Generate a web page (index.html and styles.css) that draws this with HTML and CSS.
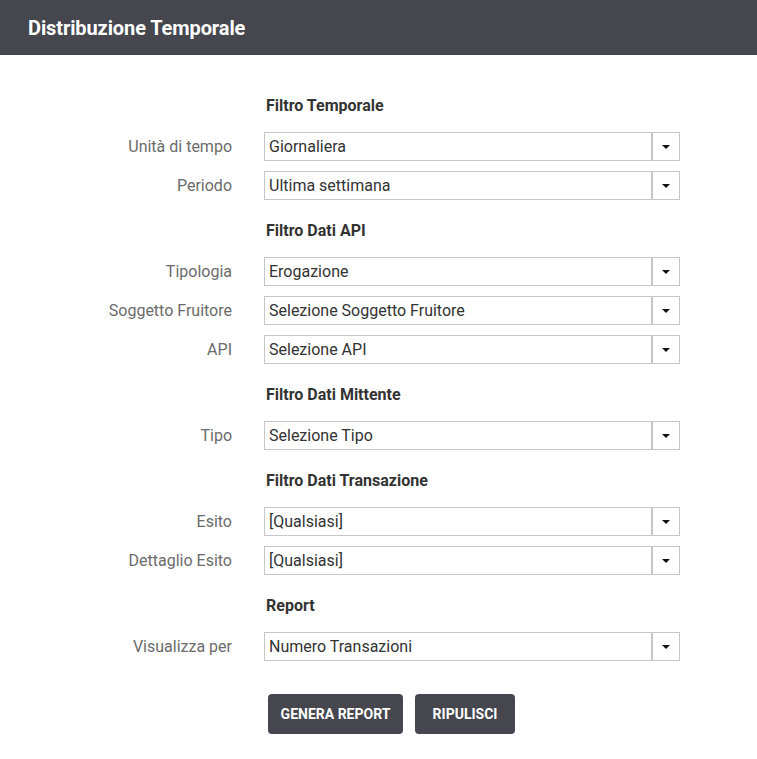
FILE: index.html
```html
<!DOCTYPE html>
<html lang="it">
<head>
<meta charset="utf-8">
<title>Distribuzione Temporale</title>
<link rel="stylesheet" href="styles.css">
</head>
<body>
<header class="topbar"><h1 class="title">Distribuzione Temporale</h1></header>
<main class="form">
  <div class="section">Filtro Temporale</div>
  <label class="label">Unità di tempo</label><div class="select"><span class="value">Giornaliera</span><span class="arrow"></span></div>
  <label class="label">Periodo</label><div class="select"><span class="value">Ultima settimana</span><span class="arrow"></span></div>

  <div class="section">Filtro Dati API</div>
  <label class="label">Tipologia</label><div class="select"><span class="value">Erogazione</span><span class="arrow"></span></div>
  <label class="label">Soggetto Fruitore</label><div class="select"><span class="value">Selezione Soggetto Fruitore</span><span class="arrow"></span></div>
  <label class="label">API</label><div class="select"><span class="value">Selezione API</span><span class="arrow"></span></div>

  <div class="section">Filtro Dati Mittente</div>
  <label class="label">Tipo</label><div class="select"><span class="value">Selezione Tipo</span><span class="arrow"></span></div>

  <div class="section">Filtro Dati Transazione</div>
  <label class="label">Esito</label><div class="select"><span class="value">[Qualsiasi]</span><span class="arrow"></span></div>
  <label class="label">Dettaglio Esito</label><div class="select"><span class="value">[Qualsiasi]</span><span class="arrow"></span></div>

  <div class="section">Report</div>
  <label class="label">Visualizza per</label><div class="select"><span class="value">Numero Transazioni</span><span class="arrow"></span></div>

  <div class="actions">
    <button class="btn btn-generate">GENERA REPORT</button>
    <button class="btn btn-clear">RIPULISCI</button>
  </div>
</main>
</body>
</html>
```

FILE: styles.css
```css
html, body {
  margin: 0;
  padding: 0;
  background: #ffffff;
  font-family: Roboto, "Liberation Sans", sans-serif;
}

.topbar {
  height: 55px;
  background: #45464e;
  display: flex;
  align-items: center;
  padding-left: 28px;
}

.title {
  margin: 0;
  color: #ffffff;
  font-size: 20px;
  font-weight: 700;
  letter-spacing: -0.1px;
}

.form {
  display: grid;
  grid-template-columns: 232px 416px;
  column-gap: 32px;
  row-gap: 10px;
  padding-top: 30px;
  align-items: center;
}

.section {
  grid-column: 2;
  height: 37px;
  box-sizing: border-box;
  padding-top: 3px;
  display: flex;
  align-items: center;
  padding-left: 2px;
  font-size: 16px;
  font-weight: 700;
  color: #333333;
}

.label {
  grid-column: 1;
  text-align: right;
  font-size: 16px;
  color: #6b6b6b;
}

.select {
  grid-column: 2;
  height: 29px;
  box-sizing: border-box;
  border: 1px solid #c6c6c6;
  display: flex;
  align-items: stretch;
  background: #ffffff;
}

.value {
  flex: 1;
  display: flex;
  align-items: center;
  padding-left: 4px;
  font-size: 16px;
  color: #333333;
}

.arrow {
  width: 26px;
  border-left: 2px solid #c6c6c6;
  position: relative;
}

.arrow::after {
  content: "";
  position: absolute;
  left: 9px;
  top: 12px;
  border-left: 4px solid transparent;
  border-right: 4px solid transparent;
  border-top: 4px solid #111111;
}

.actions {
  grid-column: 2;
  display: flex;
  gap: 12px;
  padding-left: 4px;
  margin-top: 23px;
}

.btn {
  height: 40px;
  border: none;
  border-radius: 4px;
  background: #45464e;
  color: #ffffff;
  font-family: Roboto, "Liberation Sans", sans-serif;
  font-size: 14px;
  font-weight: 700;
  padding: 0;
}

.btn-generate {
  width: 135px;
}

.btn-clear {
  width: 100px;
}
```
